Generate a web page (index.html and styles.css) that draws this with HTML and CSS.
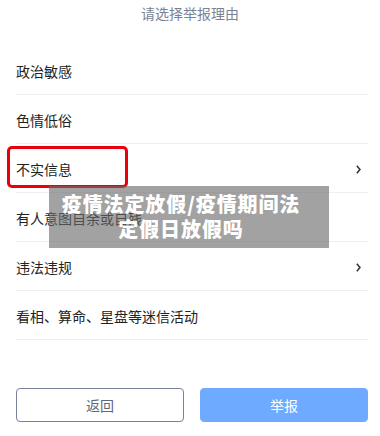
FILE: index.html
```html
<!DOCTYPE html>
<html lang="zh">
<head>
<meta charset="utf-8">
<link rel="stylesheet" href="styles.css">
</head>
<body>
<div class="page">
  <div class="title">请选择举报理由</div>
  <ul class="list">
    <li class="row"><span>政治敏感</span></li>
    <li class="row"><span>色情低俗</span></li>
    <li class="row"><span>不实信息</span><svg class="chev" width="5" height="9" viewBox="0 0 5 9"><polyline points="0.8,0.8 4,4.5 0.8,8.2" fill="none" stroke="#333" stroke-width="1.5"/></svg></li>
    <li class="row"><span>有人意图自余或自残</span></li>
    <li class="row"><span>违法违规</span><svg class="chev" width="5" height="9" viewBox="0 0 5 9"><polyline points="0.8,0.8 4,4.5 0.8,8.2" fill="none" stroke="#333" stroke-width="1.5"/></svg></li>
    <li class="row"><span>看相、算命、星盘等迷信活动</span></li>
  </ul>
  <div class="actions">
    <button class="btn btn-back">返回</button>
    <button class="btn btn-report">举报</button>
  </div>
  <div class="highlight"></div>
  <div class="caption">疫情法定放假/疫情期间法<br>定假日放假吗</div>
</div>
</body>
</html>
```
FILE: styles.css
```css
* { box-sizing: border-box; }
html, body { margin: 0; padding: 0; background: #fff; }
body {
  font-family: "Noto Sans CJK SC", "Noto Sans", sans-serif;
  color: #222;
  width: 380px;
  height: 436px;
  overflow: hidden;
}
.page { position: relative; width: 380px; height: 436px; }
.title {
  height: 46px;
  line-height: 26px;
  text-align: center;
  font-size: 14px;
  color: #7a8296;
}
.list { list-style: none; margin: 0; padding: 0; }
.row {
  margin: 0 12px 0 16px;
  height: 49px;
  border-bottom: 1px solid #efefef;
  display: flex;
  align-items: center;
  justify-content: space-between;
  font-size: 14px;
  padding-top: 2px;
  padding-right: 7px;
}
.chev { display: block; }
.actions {
  display: flex;
  gap: 16px;
  padding: 48px 12px 0 16px;
}
.btn {
  width: 168px;
  height: 34px;
  border-radius: 4px;
  font-family: "Noto Sans CJK SC", sans-serif;
  font-size: 14px;
  padding: 0;
}
.btn-back {
  background: #fff;
  border: 1px solid #7a8299;
  color: #5f677a;
}
.btn-report {
  background: #6eaaff;
  border: 1px solid #6eaaff;
  color: #fff;
}
.highlight {
  position: absolute;
  left: 7px;
  top: 146px;
  width: 121px;
  height: 42px;
  border: 3.5px solid #e8000b;
  border-radius: 5px;
}
.caption {
  position: absolute;
  left: 49px;
  top: 186px;
  width: 280px;
  height: 62px;
  padding: 5px 16px 0 0;
  background: rgba(105, 105, 105, 0.62);
  color: #fff;
  font-weight: 900;
  font-size: 20px;
  letter-spacing: 0.9px;
  line-height: 25px;
  text-align: center;
}
```
